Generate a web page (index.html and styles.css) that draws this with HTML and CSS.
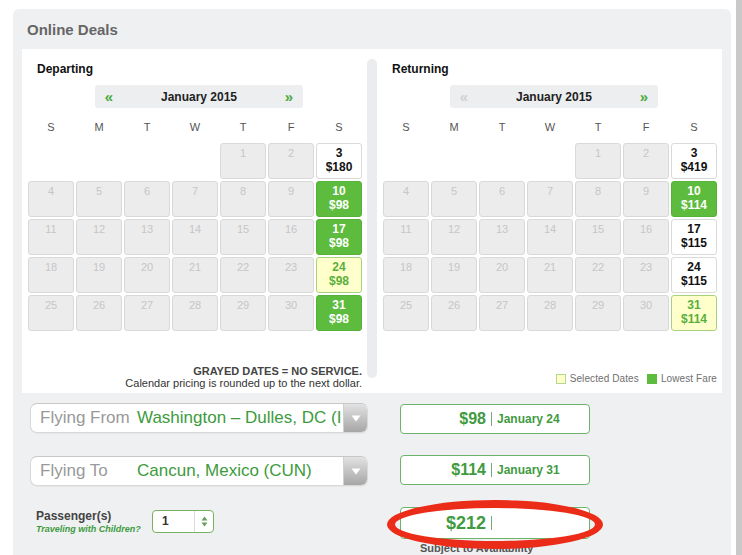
FILE: index.html
```html
<!DOCTYPE html>
<html>
<head>
<meta charset="utf-8">
<title>Online Deals</title>
<link rel="stylesheet" href="styles.css">
</head>
<body>
<div class="panel">
  <h1 class="title">Online Deals</h1>
  <div class="cal-box">
    <div class="cal">
      <div class="cal-title">Departing</div>
      <div class="month-nav"><span class="nav-arrow">«</span><span class="month">January 2015</span><span class="nav-arrow">»</span></div>
      <div class="dow"><span>S</span><span>M</span><span>T</span><span>W</span><span>T</span><span>F</span><span>S</span></div>
      <div class="grid">
        <div class="cell empty"></div><div class="cell empty"></div><div class="cell empty"></div><div class="cell empty"></div>
        <div class="cell">1</div><div class="cell">2</div><div class="cell avail">3<br>$180</div>
        <div class="cell">4</div><div class="cell">5</div><div class="cell">6</div><div class="cell">7</div><div class="cell">8</div><div class="cell">9</div><div class="cell avail low">10<br>$98</div>
        <div class="cell">11</div><div class="cell">12</div><div class="cell">13</div><div class="cell">14</div><div class="cell">15</div><div class="cell">16</div><div class="cell avail low">17<br>$98</div>
        <div class="cell">18</div><div class="cell">19</div><div class="cell">20</div><div class="cell">21</div><div class="cell">22</div><div class="cell">23</div><div class="cell avail sel">24<br>$98</div>
        <div class="cell">25</div><div class="cell">26</div><div class="cell">27</div><div class="cell">28</div><div class="cell">29</div><div class="cell">30</div><div class="cell avail low">31<br>$98</div>
      </div>
      <div class="cal-foot notes">
        <div class="note-strong">GRAYED DATES = NO SERVICE.</div>
        <div>Calendar pricing is rounded up to the next dollar.</div>
      </div>
    </div>
    <div class="divider"></div>
    <div class="cal">
      <div class="cal-title">Returning</div>
      <div class="month-nav"><span class="nav-arrow off">«</span><span class="month">January 2015</span><span class="nav-arrow">»</span></div>
      <div class="dow"><span>S</span><span>M</span><span>T</span><span>W</span><span>T</span><span>F</span><span>S</span></div>
      <div class="grid">
        <div class="cell empty"></div><div class="cell empty"></div><div class="cell empty"></div><div class="cell empty"></div>
        <div class="cell">1</div><div class="cell">2</div><div class="cell avail">3<br>$419</div>
        <div class="cell">4</div><div class="cell">5</div><div class="cell">6</div><div class="cell">7</div><div class="cell">8</div><div class="cell">9</div><div class="cell avail low">10<br>$114</div>
        <div class="cell">11</div><div class="cell">12</div><div class="cell">13</div><div class="cell">14</div><div class="cell">15</div><div class="cell">16</div><div class="cell avail">17<br>$115</div>
        <div class="cell">18</div><div class="cell">19</div><div class="cell">20</div><div class="cell">21</div><div class="cell">22</div><div class="cell">23</div><div class="cell avail">24<br>$115</div>
        <div class="cell">25</div><div class="cell">26</div><div class="cell">27</div><div class="cell">28</div><div class="cell">29</div><div class="cell">30</div><div class="cell avail sel">31<br>$114</div>
      </div>
      <div class="cal-foot legend">
        <span class="swatch swatch-sel"></span><span class="legend-text">Selected Dates</span>
        <span class="swatch swatch-low"></span><span class="legend-text">Lowest Fare</span>
      </div>
    </div>
  </div>

  <div class="form">
    <div class="form-left">
      <div class="select">
        <span class="select-label">Flying From</span>
        <span class="select-value">Washington – Dulles, DC (I</span>
        <span class="select-btn"><svg width="10" height="7" viewBox="0 0 10 7"><path d="M0.5 0.5 L9.5 0.5 L5 6.5 Z" fill="#fff"/></svg></span>
      </div>
      <div class="select">
        <span class="select-label">Flying To</span>
        <span class="select-value">Cancun, Mexico (CUN)</span>
        <span class="select-btn"><svg width="10" height="7" viewBox="0 0 10 7"><path d="M0.5 0.5 L9.5 0.5 L5 6.5 Z" fill="#fff"/></svg></span>
      </div>
      <div class="pax">
        <div class="pax-label">
          <div class="pax-title">Passenger(s)</div>
          <div class="pax-sub">Traveling with Children?</div>
        </div>
        <div class="pax-select">
          <span class="pax-value">1</span>
          <span class="pax-arrows"><svg width="7" height="11" viewBox="0 0 7 11"><path d="M3.5 0.5 L6.5 4.5 L0.5 4.5 Z M3.5 10.5 L6.5 6.5 L0.5 6.5 Z" fill="#6a9e5a"/></svg></span>
        </div>
      </div>
    </div>
    <div class="form-right">
      <div class="fare">
        <span class="fare-price">$98</span><span class="fare-sep"></span><span class="fare-date">January 24</span>
      </div>
      <div class="fare">
        <span class="fare-price">$114</span><span class="fare-sep"></span><span class="fare-date">January 31</span>
      </div>
      <div class="total-wrap">
        <div class="fare fare-total">
          <span class="fare-price">$212</span><span class="fare-sep"></span><span class="fare-date"></span>
        </div>
        <div class="ring"></div>
        <div class="avail-note">Subject to Availability</div>
      </div>
    </div>
  </div>
</div>
<div class="gutter"></div>
<div class="edge"></div>
</body>
</html>
```

FILE: styles.css
```css
* { box-sizing: border-box; }

html, body {
  margin: 0;
  padding: 0;
}

body {
  display: flex;
  height: 555px;
  overflow: hidden;
  background: #fff;
  font-family: "Liberation Sans", Arial, sans-serif;
  color: #222;
  padding-left: 13px;
}

.panel {
  width: 718px;
  margin-top: 9px;
  background: #eff0f2;
  border-radius: 6px 6px 0 0;
  padding: 12px 9px 0 9px;
  overflow: hidden;
}

.title {
  margin: 0 0 10px 5px;
  font-size: 15px;
  line-height: 18px;
  font-weight: bold;
  color: #666;
}

.cal-box {
  display: flex;
  background: #fff;
  height: 344px;
  padding: 0 5px 4px 6px;
}

.cal {
  width: 334px;
  display: flex;
  flex-direction: column;
}

.cal-title {
  margin: 13px 0 0 9px;
  font-size: 12px;
  line-height: 14px;
  font-weight: bold;
  color: #111;
}

.month-nav {
  margin: 9px 0 0 67px;
  width: 208px;
  height: 23px;
  background: #eceef0;
  border-radius: 3px;
  display: flex;
  align-items: center;
  justify-content: space-between;
  padding: 0 8px 0 8px;
}

.month {
  font-size: 12px;
  font-weight: bold;
  color: #222;
}

.nav-arrow {
  font-size: 15px;
  font-weight: bold;
  color: #4aaa3a;
  line-height: 15px;
  width: 12px;
  text-align: center;
}

.nav-arrow.off {
  color: #cfd1d3;
}

.dow {
  display: grid;
  grid-template-columns: repeat(7, 46px);
  column-gap: 2px;
  margin-top: 11px;
  height: 16px;
  line-height: 16px;
  font-size: 11px;
  color: #555;
  text-align: center;
}

.grid {
  display: grid;
  grid-template-columns: repeat(7, 46px);
  grid-auto-rows: 36px;
  gap: 2px;
  margin-top: 8px;
}

.cell {
  background: #ececec;
  border: 1px solid #d9d9d9;
  border-radius: 3px;
  color: #c6c6c6;
  font-size: 11px;
  line-height: 14px;
  padding-top: 2px;
  text-align: center;
}

.cell.empty {
  background: transparent;
  border-color: transparent;
}

.cell.avail {
  background: #fff;
  border-color: #dadada;
  color: #111;
  font-weight: bold;
  font-size: 12px;
}

.cell.low {
  background: #5dbb3e;
  border-color: #55b236;
  color: #fff;
}

.cell.sel {
  background: #ffffcc;
  border-color: #a7d37f;
  color: #5aaf3c;
}

.cal-foot {
  margin-top: auto;
}

.notes {
  text-align: right;
  font-size: 11px;
  line-height: 12px;
  color: #333;
}

.note-strong {
  font-weight: bold;
  color: #444;
}

.legend {
  display: flex;
  justify-content: flex-end;
  align-items: center;
  margin-bottom: 5px;
  font-size: 10px;
  letter-spacing: 0.1px;
  color: #6f6f6f;
}

.swatch {
  width: 10px;
  height: 10px;
  margin-right: 4px;
}

.swatch-sel {
  background: #ffffcc;
  border: 1px solid #b5d890;
}

.swatch-low {
  background: #5dbb3e;
  margin-left: 8px;
}

.divider {
  width: 10px;
  margin: 10px 6px 11px 5px;
  background: #eaecee;
  border-radius: 5px;
}

.form {
  display: flex;
  padding: 10px 0 0 8px;
}

.form-left {
  width: 338px;
}

.select {
  display: flex;
  align-items: center;
  height: 30px;
  background: #fff;
  border: 1px solid #d9d9d9;
  border-top-color: #c8c8c8;
  border-radius: 7px;
  margin-bottom: 23px;
  overflow: hidden;
  box-shadow: 0 1px 1px rgba(0,0,0,0.04);
}

.select-label {
  width: 106px;
  flex: none;
  padding-left: 9px;
  font-size: 17px;
  color: #999;
  white-space: nowrap;
}

.select-value {
  flex: 1;
  white-space: nowrap;
  font-size: 17px;
  color: #3d9b3d;
}

.select-btn {
  flex: none;
  width: 24px;
  align-self: stretch;
  background: linear-gradient(#e2e2e2, #a6a6a6);
  border-left: 1px solid #d0d0d0;
  display: flex;
  align-items: center;
  justify-content: center;
}

.pax {
  display: flex;
  align-items: flex-start;
  margin-top: 2px;
  padding-left: 6px;
}

.pax-label {
  width: 116px;
}

.pax-title {
  font-size: 12px;
  line-height: 14px;
  font-weight: bold;
  color: #444;
}

.pax-sub {
  font-size: 9px;
  line-height: 12px;
  font-style: italic;
  font-weight: bold;
  color: #3d9b3d;
}

.pax-select {
  width: 62px;
  height: 23px;
  margin-top: 1px;
  border: 1px solid #78b25e;
  border-radius: 4px;
  background: #fff;
  display: flex;
  align-items: center;
}

.pax-value {
  width: 42px;
  padding-left: 9px;
  font-size: 12px;
  font-weight: bold;
  color: #333;
  border-right: 1px solid #dcdcdc;
  align-self: stretch;
  line-height: 21px;
}

.pax-arrows {
  flex: 1;
  display: flex;
  justify-content: center;
}

.form-right {
  width: 190px;
  margin-left: 32px;
  padding-top: 1px;
}

.fare {
  display: flex;
  align-items: center;
  height: 30px;
  border: 1px solid #6cb46c;
  border-radius: 4px;
  background: #fff;
  margin-bottom: 21px;
  color: #3f9b3f;
  font-weight: bold;
}

.fare-price {
  width: 85px;
  text-align: right;
  font-size: 16px;
}

.fare-sep {
  width: 1px;
  height: 14px;
  margin: 0 5px;
  background: #7aa87a;
}

.fare-date {
  font-size: 12px;
}

.total-wrap {
  position: relative;
  margin-top: 22px;
}

.fare-total {
  height: 32px;
  margin-bottom: 0;
}

.fare-total .fare-price {
  font-size: 18px;
}

.ring {
  position: absolute;
  left: -13px;
  top: -7px;
  width: 216px;
  height: 49px;
  border: 8px solid #ea2c18;
  border-radius: 50%;
}

.avail-note {
  margin-top: 3px;
  padding-left: 20px;
  font-size: 11px;
  line-height: 12px;
  font-weight: bold;
  color: #555;
}

.gutter {
  width: 5px;
  flex: none;
}

.edge {
  width: 6px;
  flex: none;
  background: #c9c9c9;
}
```
